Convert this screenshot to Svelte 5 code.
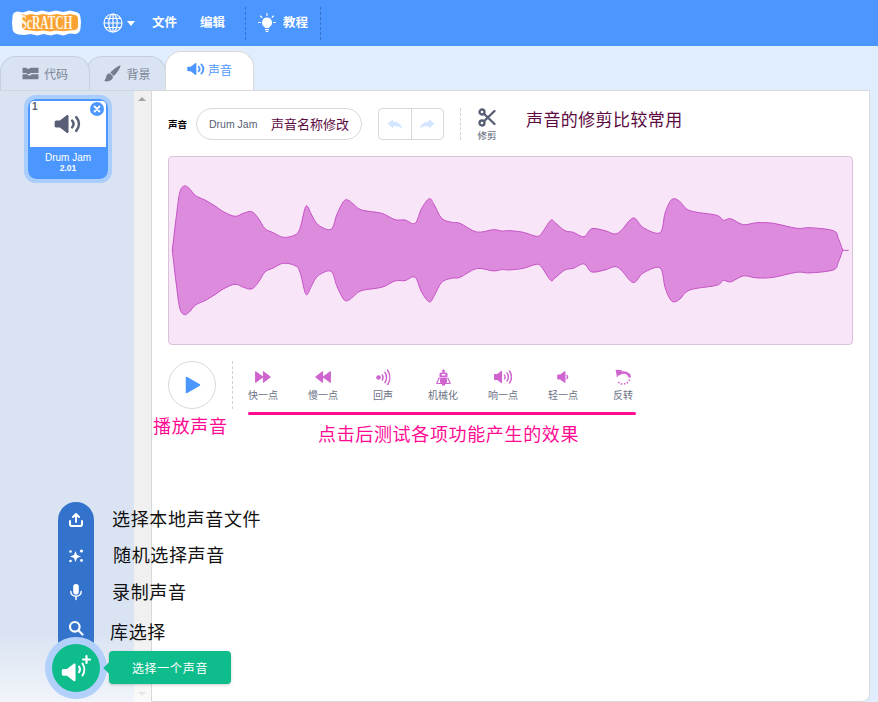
<script lang="ts">
  // top outline of the wave, in page pixels read off the reference
  const left = [[22,300],[35,190],[45,125],[58,108],[72,115],[92,137],[120,150],[150,168],[175,185],[210,199],[235,190],[260,185],[280,205],[300,236],[325,248],[355,262],[390,255],[405,235],[420,175],[428,170],[440,195],[460,225],[498,238],[515,195],[535,155],[548,150],[565,162],[590,180],[650,190],[690,209],[720,210],[750,220],[770,175],[793,146],[808,165],[830,205],[860,217],[885,220],[935,246],[985,239],[1010,243]];
  const right = [[0,242],[40,247],[80,259],[95,250],[122,211],[135,218],[165,242],[190,247],[222,260],[245,236],[285,242],[315,252],[335,240],[370,204],[400,233],[450,248],[465,190],[480,155],[493,146],[510,155],[540,182],[620,196],[640,211],[662,206],[700,224],[740,218],[790,220],[860,235],[900,233],[970,242],[985,265],[998,300]];

  const CENTER = 250.3;
  const top = [
    ...left.map(([x, y]) => [165 + x / 3, 150 + y / 3]),
    ...right.map(([x, y]) => [510 + x / 3, 150 + y / 3]),
  ];
  const bottom = top.map(([x, y]) => [x, 2 * CENTER - y]).reverse();

  function smooth(pts: number[][], start: boolean) {
    let d = start ? `M${pts[0][0].toFixed(1)} ${pts[0][1].toFixed(1)}` : '';
    for (let i = 0; i < pts.length - 1; i++) {
      const p0 = pts[Math.max(i - 1, 0)];
      const p1 = pts[i];
      const p2 = pts[i + 1];
      const p3 = pts[Math.min(i + 2, pts.length - 1)];
      const c1 = [p1[0] + (p2[0] - p0[0]) / 6, p1[1] + (p2[1] - p0[1]) / 6];
      const c2 = [p2[0] - (p3[0] - p1[0]) / 6, p2[1] - (p3[1] - p1[1]) / 6];
      d += `C${c1[0].toFixed(1)} ${c1[1].toFixed(1)} ${c2[0].toFixed(1)} ${c2[1].toFixed(1)} ${p2[0].toFixed(1)} ${p2[1].toFixed(1)}`;
    }
    return d;
  }

  const wave = smooth(top, true) + smooth(bottom, false) + 'Z';

  const SPEAKER = 'M1.5 8.5h2.6L9 4.6c.6-.5 1.4-.1 1.4.7v11.4c0 .8-.8 1.2-1.4.7l-4.9-3.9H1.500c-.8 0-1.300-.6-1.300-1.300V9.800c0-.7.5-1.300 1.300-1.300z';

  const effects = [
    { id: 'faster', label: '快一点' },
    { id: 'slower', label: '慢一点' },
    { id: 'echo', label: '回声' },
    { id: 'robot', label: '机械化' },
    { id: 'louder', label: '响一点' },
    { id: 'softer', label: '轻一点' },
    { id: 'reverse', label: '反转' },
  ];
</script>

<div class="page">
  <header class="menu-bar">
    <svg class="logo" viewBox="0 0 69 26" width="69" height="26">
      <path fill="#fff" d="M5 1.500 11 2.500 17 .5 24 2l6-1.500L37 2l7-1.500L51 2l7-1.500L64 2c3 .5 4.500 3 4.500 6l.5 4-.5 6c0 3-2 5.500-5 6l-6-.5-6 2-7-1.500-6 1.500-7-1.500-6 1.500-7-1.500-6 1-6-.5C2 23.500.5 21 .5 18L0 13l.5-6C.5 4 2 2 5 1.500z"/>
      <path fill="#f9a232" d="M7 4.500 13 5.500 19 4l6 1.200L31 4l7 1.200L45 4l7 1.200L58 4l5 1c2 .4 3 2 3 4v7c0 2-1 3.500-3 4l-6 .5-6 .8-7-.8-6 1-7-1-6 .8-7-.8-5-.5c-2-.3-3-2-3-4V9c0-2.500 1.500-4 4-4.500z"/>
      <text x="34.500" y="11.800" text-anchor="middle" transform="scale(1 1.600)" class="logo-text">ScRATCH</text>
    </svg>
    <svg class="globe" viewBox="0 0 20 20" width="20" height="20" fill="none" stroke="#fff" stroke-width="1.200">
      <circle cx="10" cy="10" r="9"/>
      <ellipse cx="10" cy="10" rx="4.200" ry="9"/>
      <path d="M10 1v18M1 10h18M2.300 5.500h15.400M2.300 14.500h15.400"/>
    </svg>
    <svg class="caret" viewBox="0 0 8 5" width="8" height="5"><path fill="#fff" d="M0 0h8L4 5z"/></svg>
    <span class="menu-item file">文件</span>
    <span class="menu-item edit">编辑</span>
    <div class="tutorial">
      <svg viewBox="0 0 18 20" width="18" height="20" fill="#fff">
        <path d="M9 4.500a5 5 0 0 0-3 9c.6.5.9 1 .9 1.500h4.200c0-.5.3-1 .9-1.500a5 5 0 0 0-3-9zM7 16h4v1.200H7zM7.700 18h2.600v1H7.700z"/>
        <path d="M9 .5v2M2.500 3l1.400 1.400M15.500 3l-1.400 1.400M.5 9.500h2M15.500 9.500h2" stroke="#fff" stroke-width="1.100" stroke-linecap="round"/>
      </svg>
      <span class="menu-item">教程</span>
    </div>
  </header>

  <nav class="tabs">
    <div class="tab code">
      <svg viewBox="0 0 16 12" width="17" height="13" fill="#757c8c">
        <path d="M.5.500h3.500l1 1h2l1-1h7.500v5H8l-1 1H5l-1-1H.5zM.5 6.800H5l1 1h2l1-1h6.500v4.700H.5z"/>
      </svg>
      <span>代码</span>
    </div>
    <div class="tab backdrop">
      <svg viewBox="0 0 16 16" width="17" height="17" fill="#757c8c">
        <path d="M15.500.5c.7.800-3.500 7.800-6.300 9.800L6 7.200C8 4.500 14.700-.2 15.500.5zM5.500 7.800l3 3c-.2 3-3.200 5.200-7.500 4.500-1-.2-.7-.9-.2-1.300 1-1 .9-2.300 1.500-3.800.5-1.300 1.700-2.400 3.200-2.400z"/>
      </svg>
      <span>背景</span>
    </div>
    <div class="tab sound">
      <svg viewBox="0 0 20 22" width="18" height="20">
        <path fill="#4c97ff" d={SPEAKER}/>
        <path d="M13 8.500c1.300 1.500 1.300 3.500 0 5M16 6c2.700 3 2.700 7 0 10" fill="none" stroke="#4c97ff" stroke-width="2" stroke-linecap="round"/>
      </svg>
      <span>声音</span>
    </div>
  </nav>

  <main class="workspace">
    <aside class="sidebar">
      <div class="list">
        <div class="sound-item">
          <div class="thumb">
            <span class="index">1</span>
            <span class="delete">
              <svg viewBox="0 0 8 8" width="8" height="8"><path d="M1.500 1.500l5 5M6.500 1.500l-5 5" stroke="#fff" stroke-width="1.800" stroke-linecap="round"/></svg>
            </span>
            <svg viewBox="0 0 20 22" width="28" height="30">
              <path fill="#575e75" d={SPEAKER}/>
              <path d="M13 8.500c1.300 1.500 1.300 3.500 0 5M16 6c2.700 3 2.700 7 0 10" fill="none" stroke="#575e75" stroke-width="1.800" stroke-linecap="round"/>
            </svg>
          </div>
          <div class="name">Drum Jam</div>
          <div class="duration">2.01</div>
        </div>
      </div>
      <div class="scroller">
        <i class="arrow up"></i>
        <i class="arrow down"></i>
      </div>
      <div class="fade"></div>
    </aside>

    <section class="editor">
      <div class="row-top">
        <span class="field-label">声音</span>
        <div class="name-input">
          <span class="sound-name">Drum Jam</span>
          <span class="note-dark">声音名称修改</span>
        </div>
        <div class="undo-group">
          <button aria-label="撤销">
            <svg viewBox="0 0 16 10" width="16" height="10"><path fill="#d3e5ff" d="M.5 4.500 6 .3v2.400c4.300-.3 8 1.700 9.500 7-2.600-2.200-5.500-2.800-9.500-2.200v2z"/></svg>
          </button>
          <button aria-label="重做">
            <svg viewBox="0 0 16 10" width="16" height="10"><path fill="#d3e5ff" d="M15.500 4.500 10 .3v2.400C5.700 2.400 2 4.400.5 9.700c2.600-2.200 5.500-2.800 9.500-2.200v2z"/></svg>
          </button>
        </div>
        <div class="dash"></div>
        <div class="trim">
          <svg viewBox="0 0 18 19" width="18" height="19" fill="none" stroke="#575e75" stroke-width="2.300">
            <circle cx="4" cy="4" r="2.500"/>
            <circle cx="4" cy="15" r="2.500"/>
            <path d="M6 5.700 16.500 16M6 13.300 16.500 3" stroke-linecap="round"/>
          </svg>
          <span>修剪</span>
        </div>
        <span class="note-dark trim-note">声音的修剪比较常用</span>
      </div>

      <div class="waveform">
        <svg viewBox="169 157 683 187" width="683" height="187">
          <path d={wave} fill="#dd8cdd" stroke="#c650c6" stroke-width="1"/>
          <path d="M172.300 250.300h1M842.700 250.300h6" fill="none" stroke="#c650c6" stroke-width="1"/>
        </svg>
      </div>

      <div class="row-controls">
        <div class="play-wrap">
          <div class="play">
            <svg viewBox="0 0 16 18" width="16" height="18"><path fill="#4c97ff" stroke="#4c97ff" stroke-width="1.500" stroke-linejoin="round" d="M1.500 1.500v15L14.500 9z"/></svg>
          </div>
          <span class="note-pink play-note">播放声音</span>
        </div>
        <div class="dash tall"></div>
        <div class="effects-wrap">
          <div class="effects">
            {#each effects as fx}
              <div class="effect">
                <div class="fx-icon">
                  {#if fx.id === 'faster'}
                    <svg viewBox="0 0 16 12" width="16" height="12" fill="#cf63cf" stroke="#cf63cf" stroke-linejoin="round"><path d="M.6.600v10.800L8 6zM8.400.600v10.800L15.400 6z"/></svg>
                  {:else if fx.id === 'slower'}
                    <svg viewBox="0 0 16 12" width="16" height="12" fill="#cf63cf" stroke="#cf63cf" stroke-linejoin="round"><path d="M15.400.600v10.800L8 6zM7.600.600v10.800L.6 6z"/></svg>
                  {:else if fx.id === 'echo'}
                    <svg viewBox="0 0 15 16" width="15" height="16" fill="none" stroke="#cf63cf" stroke-width="1.500" stroke-linecap="round">
                      <circle cx="2.500" cy="8.500" r="2.300" fill="#cf63cf" stroke="none"/>
                      <path d="M6.300 6c1 1.600 1 3.400 0 5M9 3.500c2 3.200 2 6.800 0 10M11.500 1c3 4.500 3 10.500 0 15"/>
                    </svg>
                  {:else if fx.id === 'robot'}
                    <svg viewBox="0 0 15 17" width="15" height="17" fill="#cf63cf">
                      <circle cx="7.500" cy="2" r="1.500"/>
                      <rect x="3.500" y="3.500" width="8" height="5" rx="1.500"/>
                      <rect x="5.500" y="5" width="4" height="1.400" rx=".7" fill="#fff"/>
                      <rect x="4" y="9" width="7" height="5" rx="1"/>
                      <path d="M3.500 8.500.5 14.500M11.500 8.500l3 6M.5 14.500h14" fill="none" stroke="#cf63cf" stroke-width="1.200"/>
                      <rect x="6" y="14" width="3" height="2.500"/>
                    </svg>
                  {:else if fx.id === 'louder'}
                    <svg viewBox="0 0 18 16" width="18" height="16" fill="none" stroke="#cf63cf" stroke-width="1.400" stroke-linecap="round">
                      <path fill="#cf63cf" stroke="none" d="M.8 5h2.600L7 2c.4-.3 1-.1 1 .5v11c0 .6-.6.8-1 .5L3.400 11H.8c-.5 0-.8-.3-.8-.8V5.800c0-.5.3-.8.8-.8z"/>
                      <path d="M10.500 6c.8 1.300.8 2.700 0 4M13 4c1.700 2.500 1.700 5.500 0 8M15.500 2c2.500 3.800 2.500 8.200 0 12"/>
                    </svg>
                  {:else if fx.id === 'softer'}
                    <svg viewBox="0 0 13 14" width="13" height="14" fill="#cf63cf">
                      <path d="M1 4.500h2.200L7.500 1.300c.4-.3 1-.1 1 .5v10.400c0 .6-.6.8-1 .5L3.200 9.500H1c-.5 0-.8-.3-.8-.8V5.300c0-.5.3-.8.8-.8z"/>
                      <path d="M10 5.500c.8 1 .8 2 0 3" fill="none" stroke="#cf63cf" stroke-width="1.500" stroke-linecap="round"/>
                    </svg>
                  {:else}
                    <svg viewBox="0 0 16 16" width="16" height="16" fill="none" stroke="#cf63cf" stroke-width="2.600">
                      <path d="M3.500 5.500C6 3 10.500 2.800 13 5c1.300 1.100 1.800 2.300 1.800 3.500" stroke-linecap="butt"/>
                      <path fill="#cf63cf" stroke="none" d="M.6.800 7.500 1.200 2 8.500z"/>
                      <path d="M14.600 10.500c-1 2.800-3.700 4.500-6.600 4.500-2.400 0-4.200-1-5.400-2.800" stroke-width="1.600" stroke-dasharray="1.500 1.500"/>
                    </svg>
                  {/if}
                </div>
                <span class="fx-label">{fx.label}</span>
              </div>
            {/each}
          </div>
          <div class="underline"></div>
          <div class="note-pink fx-note">点击后测试各项功能产生的效果</div>
        </div>
      </div>
    </section>
  </main>

  <div class="add-menu">
    <div class="add-row first">
      <span class="add-icon">
        <svg viewBox="0 0 16 16" width="16" height="16" fill="none" stroke="#fff" stroke-width="2" stroke-linecap="round" stroke-linejoin="round">
          <path d="M8 10V2.500M5 5l3-3 3 3" fill="#fff"/>
          <path d="M2 9v3.200c0 1 .7 1.800 1.800 1.800h8.400c1.100 0 1.800-.8 1.800-1.800V9"/>
        </svg>
      </span>
      <span class="add-label up2">选择本地声音文件</span>
    </div>
    <div class="add-row">
      <span class="add-icon">
        <svg viewBox="0 0 16 16" width="16" height="16" fill="#fff">
          <path d="M7.500 3 9 7l4 1.500L9 10l-1.500 4L6 10 2 8.500 6 7z"/>
          <circle cx="13.500" cy="3" r="1.600"/><circle cx="13.500" cy="12.500" r="1.400"/><circle cx="2.500" cy="3.500" r="1.300"/><circle cx="2.500" cy="13" r="1.300"/>
        </svg>
      </span>
      <span class="add-label shift up2">随机选择声音</span>
    </div>
    <div class="add-row">
      <span class="add-icon">
        <svg viewBox="0 0 16 18" width="16" height="18" fill="none" stroke="#fff" stroke-width="1.500" stroke-linecap="round">
          <rect x="5.200" y="1" width="5.600" height="10.500" rx="2.800" fill="#fff" stroke="none"/>
          <path d="M2.800 8.500c0 3 2.300 4.800 5.200 4.800s5.200-1.800 5.200-4.800M8 13.500v3"/>
        </svg>
      </span>
      <span class="add-label up1">录制声音</span>
    </div>
    <div class="add-row">
      <span class="add-icon">
        <svg viewBox="0 0 16 16" width="16" height="16" fill="none" stroke="#fff" stroke-width="2.200" stroke-linecap="round">
          <circle cx="6.800" cy="6.800" r="4.800"/>
          <path d="M10.500 10.500 14.500 14.500"/>
        </svg>
      </span>
      <span class="add-label back">库选择</span>
    </div>
    <div class="add-tail"></div>
  </div>

  <div class="fab">
    <svg viewBox="0 0 30 30" width="30" height="30">
      <path fill="#fff" transform="translate(.5 4.500) scale(1.350)" d={SPEAKER}/>
      <path d="M18 13.500c1.200 1.800 1.200 4 0 5.800M21.500 10.500c2.400 3.500 2.400 8.500 0 12" fill="none" stroke="#fff" stroke-width="2" stroke-linecap="round"/>
      <path d="M25.500 3v7M22 6.500h7" stroke="#fff" stroke-width="2.200" stroke-linecap="round"/>
    </svg>
  </div>
  <div class="fab-tip">选择一个声音</div>
</div>

<style>
  :global(body) {
    margin: 0;
    background: #e0edff;
  }
  .page {
    position: relative;
    width: 878px;
    height: 702px;
    overflow: hidden;
    display: flex;
    flex-direction: column;
    background: #e0edff;
    font-family: 'Noto Sans CJK SC', 'Liberation Sans', sans-serif;
    color: #575e75;
  }

  .menu-bar {
    height: 46px;
    flex: none;
    display: flex;
    align-items: center;
    background: #4c97ff;
    padding-left: 12px;
  }
  .logo-text {
    font-family: 'Liberation Serif', serif;
    font-weight: 700;
    font-size: 11.500px;
    fill: #fff4e2;
  }
  .globe {
    margin-left: 22px;
  }
  .caret {
    margin-left: 4px;
  }
  .menu-item {
    font-size: 12.500px;
    font-weight: 700;
    color: #fff;
    line-height: 1;
    padding-bottom: 2px;
  }
  .file {
    margin-left: 17px;
  }
  .edit {
    margin-left: 23px;
  }
  .tutorial {
    margin-left: 20px;
    height: 33px;
    width: 76px;
    box-sizing: border-box;
    display: flex;
    align-items: center;
    justify-content: center;
    gap: 7px;
    border-left: 1px dashed #3373cc;
    border-right: 1px dashed #3373cc;
  }

  .tabs {
    height: 44px;
    flex: none;
    display: flex;
    align-items: flex-end;
    padding-top: 5px;
    box-sizing: border-box;
  }
  .tab {
    box-sizing: border-box;
    height: 34px;
    display: flex;
    align-items: center;
    justify-content: center;
    gap: 5px;
    font-size: 12px;
    color: #7d8595;
    background: #d9e3f2;
    border: 1px solid #c5cfdd;
    border-bottom: 0;
    border-radius: 16px 16px 0 0;
  }
  .tab.code {
    width: 90px;
    position: relative;
    z-index: 2;
  }
  .tab.backdrop {
    width: 80px;
    margin-left: -4px;
    padding-left: 3px;
    position: relative;
    z-index: 1;
  }
  .tab.sound {
    width: 89px;
    height: 39px;
    margin-left: -1px;
    position: relative;
    z-index: 3;
    background: #fff;
    color: #4c97ff;
    border-color: #d9d9d9;
    padding-bottom: 4px;
    gap: 3px;
  }

  .workspace {
    flex: 1;
    display: flex;
    min-height: 0;
  }
  .sidebar {
    position: relative;
    width: 151px;
    flex: none;
    display: flex;
    border-top: 1px solid #d0d7e2;
    box-sizing: border-box;
  }
  .list {
    width: 134px;
    background: #d9e3f2;
    padding: 4px 0 0 24px;
    box-sizing: border-box;
  }
  .sound-item {
    box-sizing: border-box;
    width: 88px;
    height: 88px;
    background: #4c97ff;
    border: 4px solid #a9cdfc;
    border-radius: 12px;
    text-align: center;
    color: #fff;
    font-family: 'Liberation Sans', sans-serif;
    background-clip: padding-box;
  }
  .thumb {
    position: relative;
    height: 46px;
    margin: 2px 2px 0 2px;
    background: #fff;
    display: flex;
    align-items: center;
    justify-content: center;
    border-radius: 4px 4px 0 0;
  }
  .index {
    position: absolute;
    top: 0;
    left: 2px;
    font-size: 10px;
    font-weight: 700;
    color: #575e75;
  }
  .delete {
    position: absolute;
    top: 1px;
    right: 2px;
    width: 14px;
    height: 14px;
    background: #4c97ff;
    border-radius: 50%;
    display: flex;
    align-items: center;
    justify-content: center;
  }
  .name {
    font-size: 10px;
    line-height: 11px;
    margin-top: 5px;
  }
  .duration {
    font-size: 8.500px;
    font-weight: 700;
    line-height: 10px;
  }
  .scroller {
    position: relative;
    width: 17px;
    background: #f0f0f0;
  }
  .arrow {
    position: absolute;
    left: 4px;
    width: 0;
    height: 0;
    border-left: 4px solid transparent;
    border-right: 4px solid transparent;
  }
  .arrow.up {
    top: 6px;
    border-bottom: 4px solid #a3a3a3;
  }
  .arrow.down {
    bottom: 6px;
    border-top: 4px solid #c8c8c8;
  }
  .fade {
    position: absolute;
    left: 0;
    right: 0;
    bottom: 0;
    height: 70px;
    background: linear-gradient(rgba(255, 255, 255, 0), rgba(255, 255, 255, 0.65));
  }

  .editor {
    flex: 1;
    margin-right: 8px;
    background: #fff;
    border: 1px solid #d9d9d9;
    border-radius: 0 0 8px 0;
    padding: 17px 16px 0 16px;
    box-sizing: border-box;
  }
  .row-top {
    display: flex;
    align-items: center;
    height: 32px;
  }
  .field-label {
    font-size: 9.500px;
    font-weight: 700;
    color: #000;
    width: 28px;
    flex: none;
  }
  .name-input {
    box-sizing: border-box;
    width: 166px;
    height: 32px;
    display: flex;
    align-items: center;
    padding-left: 12px;
    border: 1px solid #d9d9d9;
    border-radius: 16px;
  }
  .sound-name {
    font-family: 'Liberation Sans', sans-serif;
    font-size: 10.500px;
    width: 62px;
    flex: none;
  }
  .note-dark {
    font-size: 13px;
    color: #5c0a42;
    white-space: nowrap;
    margin-top: -2px;
  }
  .undo-group {
    margin-left: 16px;
    display: flex;
    box-sizing: border-box;
    height: 32px;
    width: 66px;
    border: 1px solid #d9d9d9;
    border-radius: 4px;
  }
  .undo-group button {
    flex: 1;
    background: none;
    border: 0;
    padding: 0;
    display: flex;
    align-items: center;
    justify-content: center;
  }
  .undo-group button + button {
    border-left: 1px solid #d9d9d9;
  }
  .dash {
    margin-left: 16px;
    height: 32px;
    border-left: 1px dashed #d0d0d0;
  }
  .dash.tall {
    margin-left: 16px;
    height: 48px;
  }
  .trim {
    width: 52px;
    display: flex;
    flex-direction: column;
    align-items: center;
    font-size: 9.500px;
    line-height: 12px;
  }
  .trim svg {
    margin-bottom: 2px;
  }
  .row-top .trim-note {
    font-size: 17px;
    letter-spacing: 0.4px;
    line-height: 24px;
    margin-left: 13px;
    margin-top: -1px;
    align-self: flex-start;
  }

  .waveform {
    margin-top: 16px;
    width: 685px;
    height: 189px;
    box-sizing: border-box;
    background: #f8e6f8;
    border: 1px solid #d9c3d9;
    border-radius: 4px;
  }
  .waveform svg {
    display: block;
  }

  .row-controls {
    margin-top: 16px;
    display: flex;
    align-items: flex-start;
  }
  .play-wrap {
    position: relative;
    width: 48px;
    flex: none;
  }
  .play {
    box-sizing: border-box;
    width: 48px;
    height: 48px;
    border: 1px solid #d9d9d9;
    border-radius: 50%;
    display: flex;
    align-items: center;
    justify-content: center;
    padding-left: 2px;
  }
  .note-pink {
    font-size: 18px;
    letter-spacing: 0.65px;
    line-height: 24px;
    color: #ff0a93;
    white-space: nowrap;
  }
  .play-note {
    position: absolute;
    left: -15px;
    top: 52px;
  }
  .effects-wrap {
    width: 420px;
    flex: none;
  }
  .effects {
    display: flex;
    padding-top: 6px;
  }
  .effect {
    width: 60px;
    flex: none;
    display: flex;
    flex-direction: column;
    align-items: center;
  }
  .fx-icon {
    height: 20px;
    display: flex;
    align-items: center;
    justify-content: center;
  }
  .fx-label {
    margin-top: 2px;
    font-size: 10px;
    line-height: 12px;
    color: #6b7184;
  }
  .underline {
    height: 3px;
    width: 388px;
    margin: 11px 0 0 15px;
    background: #ff0a93;
    border-radius: 2px;
  }
  .fx-note {
    margin: 6px 0 0 85px;
  }

  .add-menu {
    position: absolute;
    left: 58px;
    top: 502px;
    display: flex;
    flex-direction: column;
  }
  .add-row {
    height: 36px;
    display: flex;
    align-items: center;
  }
  .add-icon {
    width: 36px;
    height: 36px;
    flex: none;
    display: flex;
    align-items: center;
    justify-content: center;
    background: #3373cc;
  }
  .add-row.first .add-icon {
    border-radius: 18px 18px 0 0;
  }
  .add-label {
    margin-left: 18px;
    font-size: 18px;
    letter-spacing: 0.65px;
    color: #111;
    white-space: nowrap;
  }
  .add-label.up2 {
    margin-top: -4px;
  }
  .add-label.up1 {
    margin-top: -2px;
  }
  .add-label.shift {
    margin-left: 19px;
  }
  .add-label.back {
    margin-left: 16px;
    margin-top: 6px;
  }
  .add-tail {
    width: 36px;
    height: 20px;
    background: #3373cc;
  }
  .fab {
    position: absolute;
    left: 52px;
    top: 644px;
    width: 48px;
    height: 48px;
    border-radius: 50%;
    background: #0fbd8c;
    box-shadow: 0 0 0 7px #b3d0fa;
    display: flex;
    align-items: center;
    justify-content: center;
  }
  .fab-tip {
    position: absolute;
    left: 109px;
    top: 651px;
    width: 122px;
    height: 33px;
    background: #0fbd8c;
    border-radius: 4px;
    box-shadow: 0 1px 3px rgba(0, 0, 0, 0.2);
    color: #fff;
    font-size: 12px;
    letter-spacing: 0.7px;
    display: flex;
    align-items: center;
    justify-content: center;
  }
  .fab-tip::before {
    content: '';
    position: absolute;
    left: -4px;
    top: 13px;
    width: 8px;
    height: 8px;
    background: #0fbd8c;
    transform: rotate(45deg);
  }
</style>
